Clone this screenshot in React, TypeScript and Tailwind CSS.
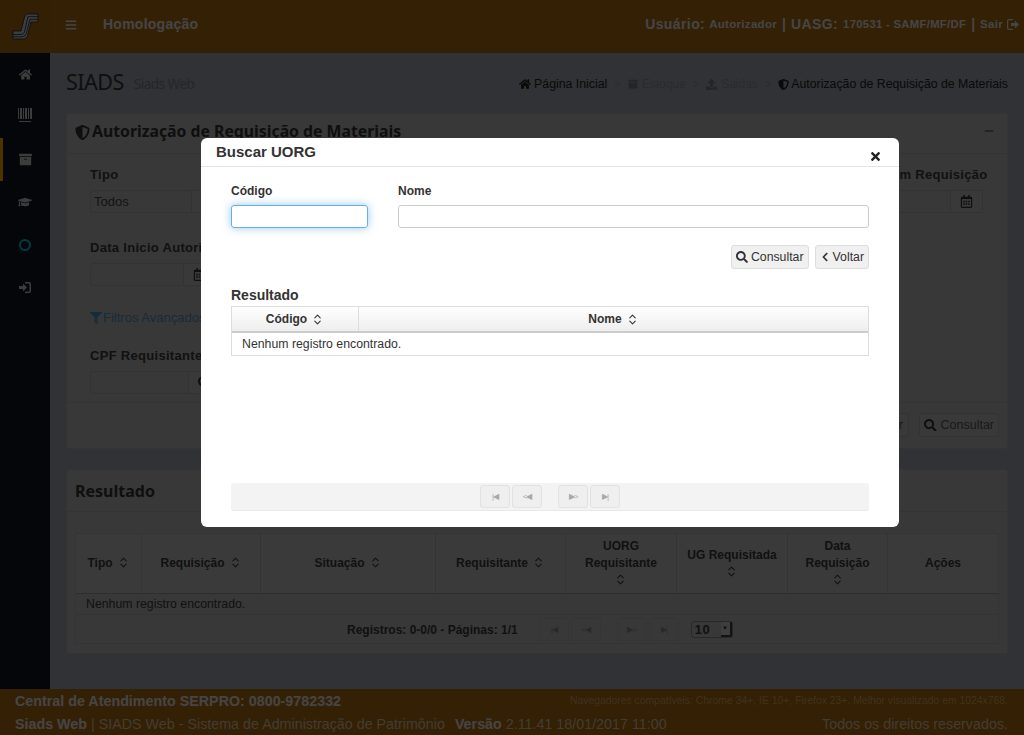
import { ChevronsUpDown } from 'lucide-react'
import {
  FaArchive,
  FaBars,
  FaChevronLeft,
  FaFilter,
  FaGraduationCap,
  FaHome,
  FaMinus,
  FaRegCalendarAlt,
  FaSearch,
  FaShieldAlt,
  FaTimes,
  FaUpload,
} from 'react-icons/fa'

const Sort = ({ block }: { block?: boolean }) => (
  <ChevronsUpDown size={13} strokeWidth={2} className={block ? 'block mx-auto mt-[1px] mb-[3px]' : 'inline-block ml-[4px] align-[-2px]'} />
)

const LogIcon = ({ className, box }: { className?: string; box: 'right' | 'left' }) => (
  <svg width="14" height="13" viewBox="0 0 14 13" fill="currentColor" className={className}>
    {box === 'right' ? (
      <>
        <path d="M7 1h4a2 2 0 0 1 2 2v7a2 2 0 0 1-2 2H7v-1.6h4a.5.5 0 0 0 .5-.5V3a.5.5 0 0 0-.5-.5H7z" />
        <path d="M1 5h4V2.500l4 4-4 4V8H1z" />
      </>
    ) : (
      <>
        <path d="M7 1H3a2 2 0 0 0-2 2v7a2 2 0 0 0 2 2h4v-1.200H3a.8.8 0 0 1-.8-.8V3a.8.8 0 0 1 .8-.8h4z" />
        <path d="M5 5h4V2.500l4 4-4 4V8H5z" />
      </>
    )}
  </svg>
)

const Pager = ({ dark }: { dark?: boolean }) => {
  const cls = `w-[30px] h-[23px] rounded-[3px] border flex items-center justify-center text-[8px] tracking-[-1px] ${
    dark ? 'border-[#b3b3b3] text-[#8a8a8a] bg-[#bbbbbb]' : 'border-[#e2e2e2] text-[#a8a8a8] bg-[#efefef]'
  }`
  return (
    <div className="flex items-center">
      <span className={cls}>|◀</span>
      <span className={`${cls} ml-[2px]`}>&lt;◀</span>
      <span className={`${cls} ml-[16px]`}>▶&gt;</span>
      <span className={`${cls} ml-[2px]`}>▶|</span>
    </div>
  )
}

const Field = ({
  label,
  width,
  value,
  icon,
  labelClass = '',
}: {
  label: string
  width: string
  value?: string
  icon: React.ReactNode
  labelClass?: string
}) => (
  <div className={width}>
    <div className={`font-bold text-[13px] leading-[16px] tracking-[0.3px] text-[#3a3a3a] whitespace-nowrap mb-[7px] ${labelClass}`}>{label}</div>
    <div className="h-[23px] flex justify-between items-center border border-[#aaaaaa] rounded-[3px] text-[13px] text-[#444]">
      <span className="pl-[3px]">{value}</span>
      <span className="w-[32px] h-full flex items-center justify-center border-l border-[#aaaaaa] bg-[#c0c0c0] text-[#333] text-[13px]">
        {icon}
      </span>
    </div>
  </div>
)

const columns = [
  { w: 'w-[66px]', lines: ['Tipo'] },
  { w: 'w-[119px]', lines: ['Requisição'] },
  { w: 'w-[175px]', lines: ['Situação'] },
  { w: 'w-[130px]', lines: ['Requisitante'] },
  { w: 'w-[111px]', lines: ['UORG', 'Requisitante'], stack: true },
  { w: 'w-[111px]', lines: ['UG Requisitada'], stack: true },
  { w: 'w-[100px]', lines: ['Data', 'Requisição'], stack: true },
  { w: 'flex-1', lines: ['Ações'], noSort: true },
]

export default function App() {
  return (
    <div className="relative h-screen overflow-hidden flex flex-col bg-[#a0a7b1] font-['Liberation_Sans',sans-serif] text-[#3a3a3a]">
      <header className="h-[53px] shrink-0 flex items-center bg-[#ad6b11] text-[#e8e8e8] pb-[4px]">
        <div className="w-[50px] h-[53px] mb-[-4px] flex items-center justify-center bg-[#a96810]">
          <svg width="27" height="27" viewBox="0 0 27 27" fill="#c8ccd6" stroke="#222" strokeWidth="0.8">
            <path d="M15 1H26V9H19L16 21Q15 26 11 26H1V18H9L12 6Q13 1 15 1Z" />
            <path d="M26 3.700H16L12.500 19Q12 21 9 21.500H1M26 6.400H18L14.500 20Q14 23.500 10 23.800H1" fill="none" />
          </svg>
        </div>
        <FaBars className="ml-[15px] text-[12px]" />
        <span className="ml-[26px] font-bold text-[14px] tracking-[0.25px]">Homologação</span>
        <div className="ml-auto mr-[4px] flex items-center font-bold text-[14px] whitespace-nowrap">
          <span className="tracking-[0.4px]">Usuário:</span>
          <span className="ml-1 text-[11.500px] tracking-[0.3px]">Autorizador</span>
          <span className="mx-[5px]">|</span>
          <span className="tracking-[0.4px]">UASG:</span>
          <span className="ml-[5px] text-[11.300px] tracking-[0.3px]">170531 - SAMF/MF/DF</span>
          <span className="mx-[5px]">|</span>
          <span className="text-[11.500px] tracking-[0.3px]">Sair</span>
          <LogIcon box="left" className="ml-[3px]" />
        </div>
      </header>

      <div className="flex-1 flex min-h-0">
        <aside className="w-[50px] shrink-0 bg-[#11171e] text-[#c8c8c8] flex flex-col items-center text-[13px]">
          <div className="h-[42px] flex items-center justify-center"><FaHome /></div>
          <div className="h-[43px] pb-[4px] flex items-center justify-center">
            <svg width="14" height="14" viewBox="0 0 14 14" fill="currentColor">
              <path d="M0 0h1v11H0zM2 0h2v11H2zM5 0h1v11H5zM7 0h2v11H7zM10 0h1v11h-1zM12 0h2v11h-2zM1 13h12v1H1z" />
            </svg>
          </div>
          <div className="relative w-full h-[43px] flex items-center justify-center">
            <span className="absolute left-0 top-0 bottom-0 w-[3px] bg-[#ffb000]" />
            <FaArchive />
          </div>
          <div className="h-[42px] flex items-center justify-center"><FaGraduationCap className="text-[14px]" /></div>
          <div className="h-[44px] flex items-center justify-center">
            <span className="w-[12px] h-[12px] rounded-full border-2 border-[#00c4e6]" />
          </div>
          <div className="h-[41px] flex items-center justify-center"><LogIcon box="right" /></div>
        </aside>

        <main className="flex-1 min-w-0 pl-[16px] pr-[16px]">
          <div className="h-[60px] flex items-center">
            <h1 className="font-['Noto_Sans',sans-serif] text-[21.500px] text-[#333] tracking-[-0.5px] mt-[-2px]">SIADS</h1>
            <span className="ml-[10px] mt-[3px] font-['Noto_Sans',sans-serif] text-[13.500px] text-[#7c8088] tracking-[-0.5px]">Siads Web</span>
            <nav className="ml-auto flex items-center text-[12.300px] text-[#222] whitespace-nowrap mt-[2px]">
              <FaHome className="mr-[3px] text-[12px]" />
              <span>Página Inicial</span>
              <span className="mx-[7px] text-[11px] text-[#8b9199]">&gt;</span>
              <FaArchive className="mr-[4px] text-[10px] text-[#777c83]" />
              <span className="text-[12px] text-[#8b9199]">Estoque</span>
              <span className="mx-[7px] text-[11px] text-[#8b9199]">&gt;</span>
              <FaUpload className="mr-[4px] text-[11px] text-[#777c83]" />
              <span className="text-[12px] text-[#8b9199]">Saidas</span>
              <span className="mx-[7px] text-[11px] text-[#8b9199]">&gt;</span>
              <FaShieldAlt className="mr-[2px] text-[11px]" />
              <span>Autorização de Requisição de Materiais</span>
            </nav>
          </div>

          <section className="h-[336px] border border-[#aeaeae] rounded-[3px] bg-[#bbbbbb] flex flex-col">
            <div className="h-[40px] shrink-0 border-b border-[#b0b0b0] flex items-start pt-[6px] px-[8px]">
              <FaShieldAlt className="text-[15px] mr-[2px] mt-[5px] text-[#333]" />
              <h2 className="font-['Noto_Sans',sans-serif] font-bold text-[15.800px] text-[#333] whitespace-nowrap">Autorização de Requisição de Materiais</h2>
              <FaMinus className="ml-auto mr-[5px] mt-[6px] text-[10px] text-[#777]" />
            </div>
            <div className="flex-1 px-[23px] pt-[13px]">
              <div className="flex justify-between">
                <Field label="Tipo" width="w-[134px]" value="Todos" icon={<FaRegCalendarAlt />} />
                <Field label="Data Fim Requisição" labelClass="ml-[11px]" width="w-[140px] mr-[1px]" icon={<FaRegCalendarAlt />} />
              </div>
              <div className="mt-[27px]">
                <Field label="Data Inicio Autorização" width="w-[126px]" icon={<FaRegCalendarAlt />} />
              </div>
              <div className="mt-[22px] flex items-center text-[13px] text-[#4f93c4]">
                <FaFilter className="text-[12px] mr-[1px]" />
                Filtros Avançados
              </div>
              <div className="mt-[20px]">
                <Field label="CPF Requisitante" width="w-[131px]" icon={<FaSearch />} />
              </div>
            </div>
            <div className="h-[46px] shrink-0 border-t border-[#b0b0b0] flex justify-end items-start pt-[10px] pr-[8px] gap-[10px]">
              <button className="h-[24px] px-[5px] border border-[#aaaaaa] rounded-[3px] bg-[#c0c0c0] text-[12.500px] text-[#555]">Limpar</button>
              <button className="h-[24px] px-[4px] flex items-center border border-[#aaaaaa] rounded-[3px] bg-[#c0c0c0] text-[12.500px] text-[#555]">
                <FaSearch className="mr-[4px] text-[#333]" />Consultar
              </button>
            </div>
          </section>

          <section className="mt-[20px] h-[185px] border border-[#aeaeae] rounded-[3px] bg-[#bbbbbb]">
            <div className="h-[42px] border-b border-[#b0b0b0] flex items-center px-[8px]">
              <h2 className="font-['Noto_Sans',sans-serif] font-bold text-[16px] text-[#333]">Resultado</h2>
            </div>
            <div className="mx-[8px] mt-[21px] border border-[#aeaeae] text-[12.300px]">
              <div className="h-[60px] flex border-b border-[#9a9a9a] bg-[#c4c4c4] font-bold text-[12px] text-[#3a3a3a]">
                {columns.map(c => (
                  <div key={c.lines.join()} className={`${c.w} border-r last:border-r-0 border-[#aeaeae] flex items-center justify-center text-center px-1 leading-[17px]`}>
                    <div>
                      {c.lines.map(l => <div key={l}>{l}{!c.noSort && !c.stack && <Sort />}</div>)}
                      {c.stack && <Sort block />}
                    </div>
                  </div>
                ))}
              </div>
              <div className="h-[21px] flex items-center px-[10px] pt-[1px] border-b border-[#aeaeae]">Nenhum registro encontrado.</div>
              <div className="h-[28px] pl-[271px] pt-[1px] flex items-center">
                <span className="font-bold text-[12px] whitespace-nowrap">Registros: 0-0/0 - Páginas: 1/1</span>
                <span className="ml-[21px]"><Pager dark /></span>
                <span className="ml-[12px] w-[42px] h-[17px] flex items-center justify-between border border-[#888] rounded-[3px] pl-[3px] font-bold text-[13px] tracking-[0.5px]">
                  10
                  <span className="w-[11px] h-full bg-[#d0d0d0] border-b-2 border-r-2 border-[#444] text-[6px] flex items-center justify-center">▼</span>
                </span>
              </div>
            </div>
          </section>
        </main>
      </div>

      <footer className="h-[46px] shrink-0 bg-[#ad6b11] text-[#e8e8e8] px-[15px] pt-[1px] flex flex-col justify-center">
        <div className="flex justify-between items-center h-[23px]">
          <span className="font-bold text-[14.300px]">Central de Atendimento SERPRO: 0800-9782332</span>
          <span className="text-[10.400px] mr-[1px] text-[#d8a860]">Navegadores compatíveis: Chrome 34+, IE 10+, Firefox 23+. Melhor visualizado em 1024x768.</span>
        </div>
        <div className="flex justify-between items-center h-[22px] mt-[1px] text-[14.300px] text-[#d8cdb0]">
          <span><b className="text-[#e8e8e8]">Siads Web</b> | SIADS Web - Sistema de Administração de Patrimônio <b className="ml-[6px] text-[#e8e8e8]">Versão</b> 2.11.41 18/01/2017 11:00</span>
          <span className="mr-[1px]">Todos os direitos reservados.</span>
        </div>
      </footer>

      <div className="absolute inset-0 bg-black/70" />

      <div className="absolute left-[201px] top-[138px] w-[698px] h-[389px] rounded-[6px] bg-white text-[#333] flex flex-col">
        <div className="h-[29px] shrink-0 border-b border-[#e5e5e5] flex items-center justify-between pl-[15px] pr-[17px]">
          <h3 className="font-bold text-[15px] mt-[1px]">Buscar UORG</h3>
          <FaTimes className="text-[13px] mt-[9px] text-[#222]" />
        </div>
        <div className="flex-1 px-[30px] pt-[16px]">
          <div className="flex gap-[30px]">
            <label className="w-[137px] block">
              <span className="block font-bold text-[12px] leading-[16px] mb-[5px]">Código</span>
              <input className="w-full h-[23px] rounded-[3px] border border-[#66afe9] shadow-[0_0_8px_rgba(102,175,233,0.7)] outline-none" />
            </label>
            <label className="flex-1 block">
              <span className="block font-bold text-[12px] leading-[16px] mb-[5px]">Nome</span>
              <input className="w-full h-[23px] rounded-[3px] border border-[#cccccc] outline-none" />
            </label>
          </div>
          <div className="mt-[17px] flex justify-end gap-[6px]">
            <button className="h-[24px] px-[4px] flex items-center border border-[#dddddd] rounded-[3px] bg-[#f0f0f0] text-[12.300px]">
              <FaSearch className="mr-[3px] text-[12px]" />Consultar
            </button>
            <button className="h-[24px] px-[4px] flex items-center border border-[#dddddd] rounded-[3px] bg-[#f0f0f0] text-[12.300px]">
              <FaChevronLeft className="mr-[3px] text-[10px]" />Voltar
            </button>
          </div>
          <h4 className="mt-[18px] font-bold text-[14px] leading-[16px]">Resultado</h4>
          <div className="mt-[3px] border border-[#dddddd] text-[12.300px]">
            <div className="h-[26px] flex border-b-2 border-[#cccccc] bg-gradient-to-b from-white to-[#eeeeee] font-bold text-[12px]">
              <div className="w-[127px] border-r border-[#dddddd] flex items-center justify-center">Código<Sort /></div>
              <div className="flex-1 flex items-center justify-center">Nome<Sort /></div>
            </div>
            <div className="h-[22px] flex items-center px-[10px]">Nenhum registro encontrado.</div>
          </div>
          <div className="mt-[127px] h-[28px] bg-[#f3f3f3] border-b border-[#e8e8e8] rounded-[3px] flex items-center pl-[249px]">
            <Pager />
          </div>
        </div>
      </div>
    </div>
  )
}
